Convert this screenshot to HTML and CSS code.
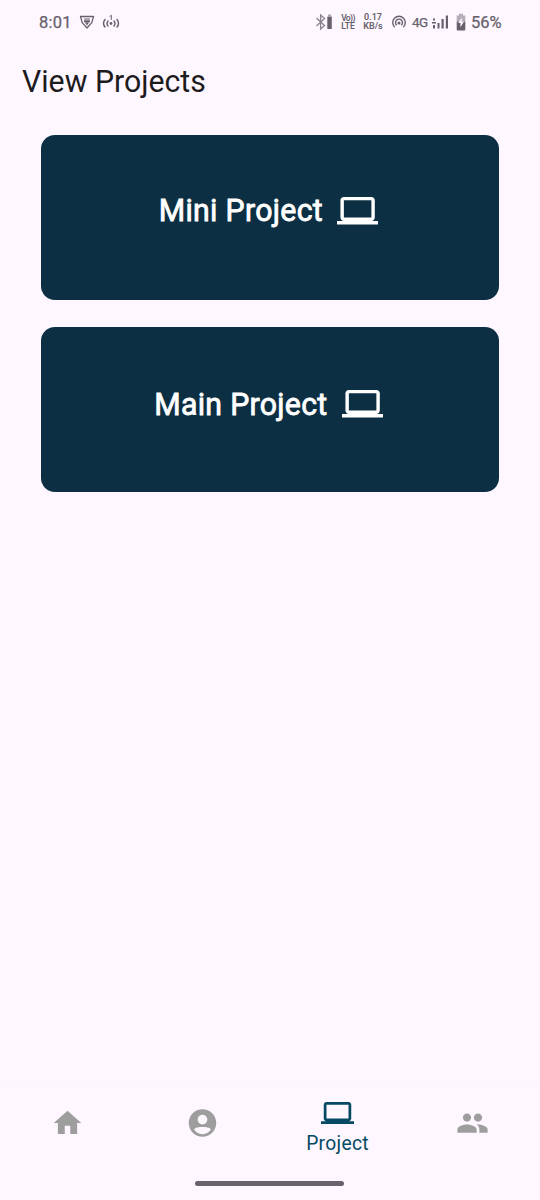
FILE: index.html
```html
<!DOCTYPE html>
<html lang="en">
<head>
<meta charset="utf-8">
<title>View Projects</title>
<link rel="stylesheet" href="styles.css">
</head>
<body>
<svg class="defs" aria-hidden="true">
  <symbol id="laptop" viewBox="0 0 24 24"><path d="M20 18c1.1 0 1.99-.9 1.99-2L22 6c0-1.1-.9-2-2-2H4c-1.1 0-2 .9-2 2v10c0 1.1.9 2 2 2H0v2h24v-2h-4zM4 6h16v10H4V6z"/></symbol>
</svg>
<div class="screen">
  <header class="status">
    <span class="clock">8:01</span>
    <svg class="shield" viewBox="0 0 16 16" width="16" height="16"><path d="M1.500 2.500h13L12.800 8.600 8 14 3.200 8.600z" fill="none" stroke="currentColor" stroke-width="1.300" stroke-linejoin="round"/><path d="M5 4.500h6v1H5zM5 6.300h6v2H5zM6 8.600h4L8 11.600z" fill="currentColor"/></svg>
    <svg class="cast" viewBox="0 0 18 16" width="18" height="16"><g fill="none" stroke="currentColor" stroke-width="1.400" stroke-linecap="round"><path d="M3 5.500Q0 9.500 3 13M15 5.500Q18 9.500 15 13M6 7Q4 9.500 6 12M12 7Q14 9.500 12 12"/><path d="M8 2.200L9.300 1.300V5.500" stroke-width="1"/></g><circle cx="9" cy="9.500" r="1.400" fill="currentColor"/></svg>
    <span class="spacer"></span>
    <svg class="bt" viewBox="0 0 18 18" width="18" height="18"><path d="M1.500 5l8 7.500L5.600 16V2l3.900 3.500L1.500 13" fill="none" stroke="#89838d" stroke-width="1.300"/><rect x="12.300" y="3.500" width="4.500" height="12.500" rx=".6" fill="currentColor"/><path d="M13 1.500h3v2h-3z" fill="#aaa4ad"/></svg>
    <span class="stack volte"><b>Vo))</b><b>LTE</b></span>
    <span class="stack speed"><b>0.17</b><b>KB/s</b></span>
    <svg class="hotspot" viewBox="0 0 16 16" width="16" height="16"><g fill="none" stroke="currentColor" stroke-width="1.400"><path d="M3.700 13.200A6.300 6.300 0 1 1 12.300 13.200M5.700 11.300A3.500 3.500 0 1 1 10.300 11.300"/></g><circle cx="8" cy="9" r="1.500" fill="currentColor"/></svg>
    <span class="net">4G</span>
    <svg class="signal" viewBox="0 0 17 16" width="17" height="16"><path d="M1 4.500h2v2H1zM0 8h4v1.500H0zM1 11h2v3.500H1zM5.500 9h2v5.500h-2zM9.500 5h2.200v9.500H9.500zM13.800 1.500H16v13h-2.200z" fill="currentColor"/></svg>
    <svg class="battery" viewBox="0 0 10 18" width="10" height="18"><path d="M3 .8h4v1.700h2.300v6H.7v-6H3z" fill="#b4adb7"/><path d="M.7 8.500h8.600v8q0 1-1 1H1.700q-1 0-1-1z" fill="currentColor"/><path d="M5.700 4.500L2.300 10h2.200v4.200L8 8.500H5.700z" fill="#fef7ff"/></svg>
    <span class="percent">56%</span>
  </header>
  <h1 class="title">View Projects</h1>
  <main class="cards">
    <a class="card"><span class="label mini">Mini Project</span><svg class="laptop"><use href="#laptop"/></svg></a>
    <a class="card"><span class="label main">Main Project</span><svg class="laptop"><use href="#laptop"/></svg></a>
  </main>
  <nav class="nav">
    <a class="tab"><svg class="icon" viewBox="0 0 24 24"><path d="M10 20v-6h4v6h5v-8h3L12 3 2 12h3v8z"/></svg></a>
    <a class="tab"><svg class="icon" viewBox="0 0 24 24"><path d="M12 2C6.480 2 2 6.480 2 12s4.480 10 10 10 10-4.480 10-10S17.520 2 12 2zm0 4c1.930 0 3.500 1.570 3.500 3.500s-1.570 3.500-3.500 3.500-3.500-1.570-3.500-3.500S10.070 6 12 6zM12 20.200c-2.500 0-4.710-1.280-6-3.220.03-1.990 4-2.080 6-2.080s5.970.09 6 2.080c-1.290 1.940-3.500 3.220-6 3.220z"/></svg></a>
    <a class="tab active"><svg class="icon"><use href="#laptop"/></svg><span>Project</span></a>
    <a class="tab"><svg class="icon" viewBox="0 0 24 24"><path d="M16 11c1.660 0 2.990-1.340 2.990-3S17.660 5 16 5s-3 1.340-3 3 1.340 3 3 3zm-8 0c1.660 0 2.990-1.340 2.990-3S9.660 5 8 5 5 6.340 5 8s1.340 3 3 3zm0 2c-2.330 0-7 1.170-7 3.500V19h14v-2.500c0-2.330-4.670-3.500-7-3.500zm8 0c-.29 0-.62.02-.97.05 1.160.84 1.970 1.970 1.970 3.450V19h6v-2.500c0-2.330-4.670-3.500-7-3.500z"/></svg></a>
  </nav>
  <div class="gesture"><i></i></div>
</div>
</body>
</html>
```
FILE: styles.css
```css
* { box-sizing: border-box; }
body { margin: 0; background: #fef7ff; font-family: Roboto, sans-serif; }
.defs { position: absolute; width: 0; height: 0; }
.screen { width: 540px; height: 1200px; display: flex; flex-direction: column; overflow: hidden; }
svg { display: block; flex: none; }
.status { height: 44px; padding: 0 38px 0 39px; display: flex; align-items: center; color: #67616b; white-space: nowrap; }
.clock, .percent { font-size: 16.500px; font-weight: 400; line-height: 20px; padding-top: 1px; -webkit-text-stroke: .25px currentColor; }
.clock { width: 40px; letter-spacing: .2px; }
.cast { margin-left: 7px; }
.spacer { flex: 1; }
.stack { display: flex; flex-direction: column; font-size: 9px; line-height: 9.500px; text-align: center; }
.stack b { font-weight: 600; }
.volte { width: 16px; margin-left: 7px; margin-right: -1px; font-size: 8.500px; line-height: 8px; }
.volte b:first-child { letter-spacing: -.6px; }
.speed { width: 22px; margin-left: 7px; }
.hotspot { margin-left: 7px; }
.net { width: 17px; margin-left: 5px; font-size: 13.500px; letter-spacing: -.6px; -webkit-text-stroke: .25px currentColor; }
.signal { margin-left: 3px; }
.battery { margin-left: 7px; }
.percent { width: 31px; margin-left: 5px; }
.title { height: 76px; margin: 0 0 0 22px; font-size: 30.250px; font-weight: 400; line-height: 75px; color: #1d1b20; transform: scaleY(1.03); }
.cards { flex: 1; display: flex; flex-direction: column; gap: 27.500px; padding: 14.800px 41.250px 0; }
.card { height: 165px; border-radius: 14px; background: #0d2f43; color: #fff; display: flex; justify-content: center; align-items: flex-start; gap: 14px; padding: 55.500px 3px 0 0; font-size: 30.250px; font-weight: 400; line-height: 42px; }
.label { -webkit-text-stroke: .8px currentColor; white-space: nowrap; text-align: center; letter-spacing: .3px; transform: scaleY(1.05); }
.mini { width: 164.500px; }
.main { width: 174px; }
.laptop { width: 41.250px; height: 41.250px; fill: currentColor; }
.nav { height: 77px; display: grid; grid-template-columns: repeat(4, 1fr); box-shadow: 0 -1px 0 #fcf5fd; transform: translateY(-.5px); }
.tab { display: flex; flex-direction: column; align-items: center; padding-top: 19.500px; color: #9e9e9e; }
.tab.active { padding-top: 10px; color: #044a63; }
.icon { width: 33px; height: 33px; fill: currentColor; }
.tab span { font-size: 19.250px; line-height: 28px; letter-spacing: .3px; transform: scaleY(1.05); }
.gesture { height: 36px; display: flex; justify-content: center; padding: 16.500px 1px 0 0; }
.gesture i { width: 149px; height: 5.500px; border-radius: 3px; background: #69626c; }
```
